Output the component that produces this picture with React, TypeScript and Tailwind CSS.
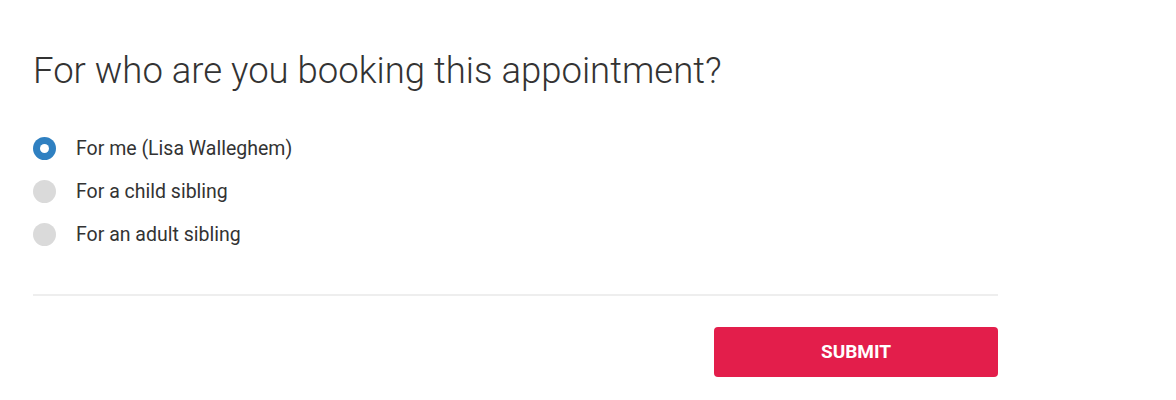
import React, { useState } from "react";

const options = [
  { id: "me", label: "For me (Lisa Walleghem)" },
  { id: "child", label: "For a child sibling" },
  { id: "adult", label: "For an adult sibling" },
];

export default function App() {
  const [selected, setSelected] = useState("me");

  return (
    <div className="w-[1176px] h-[400px] bg-white font-['Roboto',sans-serif]">
      <div className="w-[965px] ml-[33px] pt-[49px]">
        <h1 className="text-[36.5px] leading-[44px] font-light text-[#333]">
          For who are you booking this appointment?
        </h1>
        <div className="flex flex-col gap-[17px] mt-[42px]">
          {options.map((o) => {
            const active = o.id === selected;
            return (
              <label
                key={o.id}
                className="flex items-center gap-[20px] cursor-pointer"
                onClick={() => setSelected(o.id)}
              >
                <span
                  className={
                    active
                      ? "w-[23px] h-[23px] rounded-full bg-[#2f80c1] flex items-center justify-center"
                      : "w-[23px] h-[23px] rounded-full bg-[#dadada]"
                  }
                >
                  {active && <span className="w-[9px] h-[9px] rounded-full bg-white" />}
                </span>
                <span className="text-[19.5px] leading-[24px] pt-[2px] text-[#333]">{o.label}</span>
              </label>
            );
          })}
        </div>
        <div className="mt-[47px] h-[2px] bg-[#eeeeee]" />
        <div className="flex justify-end mt-[31px]">
          <button className="w-[284px] h-[50px] rounded-[4px] bg-[#e31e4b] text-white text-[19px] font-bold">
            SUBMIT
          </button>
        </div>
      </div>
    </div>
  );
}
